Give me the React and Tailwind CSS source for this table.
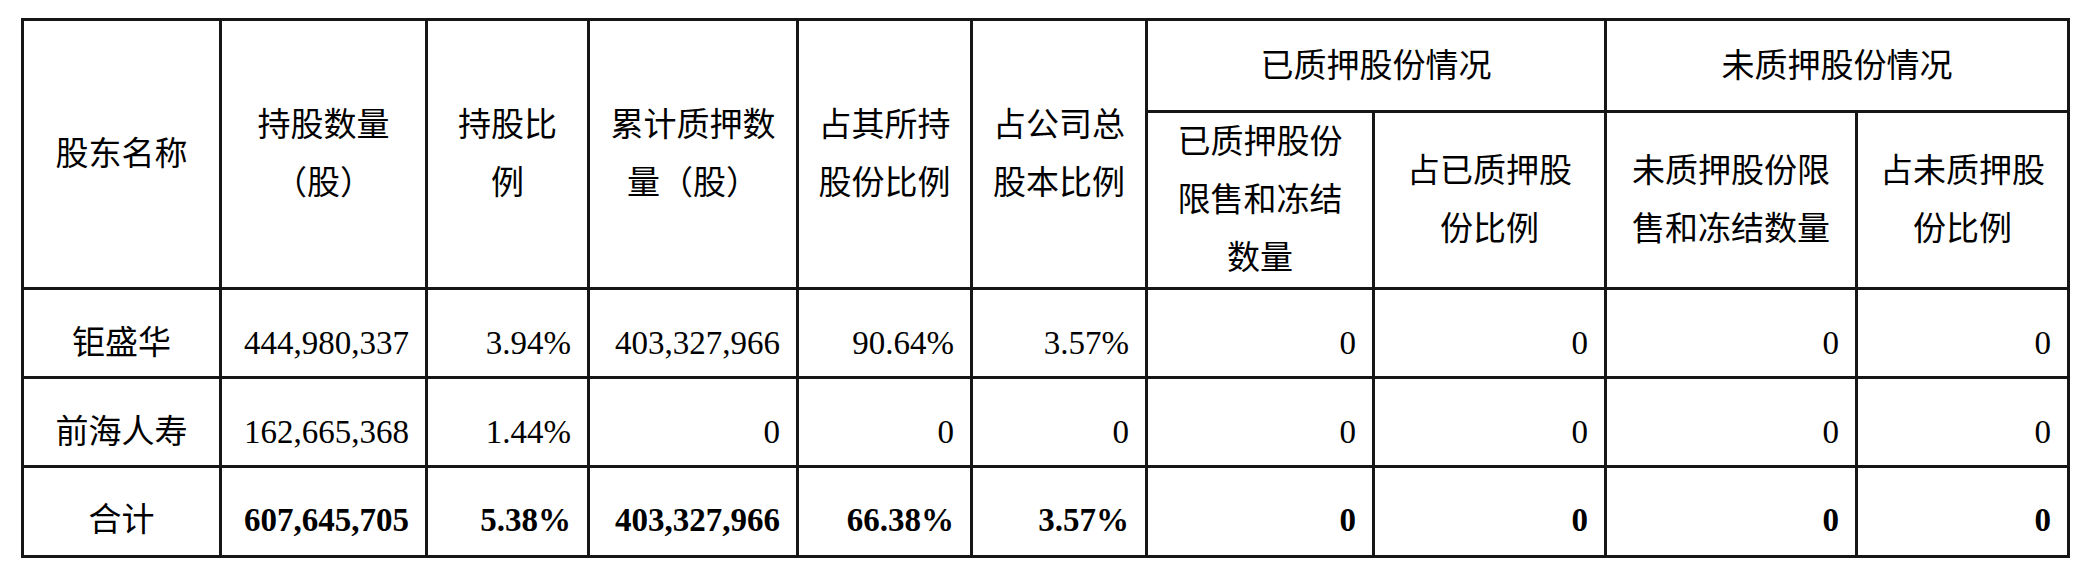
import React from "react";

const rows = [
  { name: "钜盛华", vals: ["444,980,337", "3.94%", "403,327,966", "90.64%", "3.57%", "0", "0", "0", "0"], bold: false },
  { name: "前海人寿", vals: ["162,665,368", "1.44%", "0", "0", "0", "0", "0", "0", "0"], bold: false },
  { name: "合计", vals: ["607,645,705", "5.38%", "403,327,966", "66.38%", "3.57%", "0", "0", "0", "0"], bold: true },
];

const widths = [198, 206, 162, 209, 174, 175, 227, 232, 251, 212];

export default function App() {
  const cell = "border-[3px] border-[#161616] text-center align-middle p-0";
  return (
    <div
      className="w-[2090px] h-[568px] bg-white text-black pt-[18px] pl-[21px]"
      style={{ fontFamily: '"Liberation Serif", "Noto Sans CJK SC", serif' }}
    >
      <table className="table-fixed border-collapse w-[2049px] text-[33px] leading-[58px]">
        <colgroup>
          {widths.map((w, i) => (
            <col key={i} style={{ width: w }} />
          ))}
        </colgroup>
        <thead>
          <tr className="h-[92px]">
            <th rowSpan={2} className={cell + " font-normal"}>股东名称</th>
            <th rowSpan={2} className={cell + " font-normal"}>持股数量<br />（股）</th>
            <th rowSpan={2} className={cell + " font-normal"}>持股比<br />例</th>
            <th rowSpan={2} className={cell + " font-normal"}>累计质押数<br />量（股）</th>
            <th rowSpan={2} className={cell + " font-normal"}>占其所持<br />股份比例</th>
            <th rowSpan={2} className={cell + " font-normal"}>占公司总<br />股本比例</th>
            <th colSpan={2} className={cell + " font-normal"}>已质押股份情况</th>
            <th colSpan={2} className={cell + " font-normal"}>未质押股份情况</th>
          </tr>
          <tr className="h-[176px]">
            <th className={cell + " font-normal"}>已质押股份<br />限售和冻结<br />数量</th>
            <th className={cell + " font-normal"}>占已质押股<br />份比例</th>
            <th className={cell + " font-normal"}>未质押股份限<br />售和冻结数量</th>
            <th className={cell + " font-normal"}>占未质押股<br />份比例</th>
          </tr>
        </thead>
        <tbody>
          {rows.map((r, i) => {
            const pad = r.bold ? " pt-[16px]" : " pt-[20px]";
            return (
              <tr key={i} className={r.bold ? "h-[90px]" : "h-[89px]"}>
                <td className={"border-[3px] border-[#161616] text-center align-middle px-0 pb-0" + pad}>{r.name}</td>
                {r.vals.map((v, j) => (
                  <td
                    key={j}
                    className={
                      "border-[3px] border-[#161616] text-right align-middle pr-[16px] pl-0 pb-0" +
                      pad +
                      (r.bold ? " font-bold" : "")
                    }
                  >
                    {v}
                  </td>
                ))}
              </tr>
            );
          })}
        </tbody>
      </table>
    </div>
  );
}
